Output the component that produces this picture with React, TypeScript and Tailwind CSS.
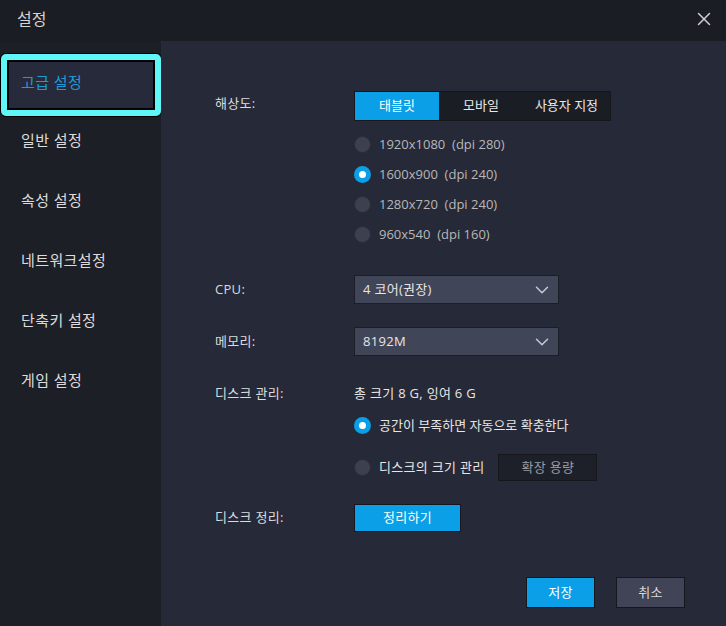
import { ChevronDown, X } from 'lucide-react';

const font = { fontFamily: '"Open Sans", "Noto Sans CJK KR", sans-serif' };

function Radio({ checked }: { checked?: boolean }) {
    return checked ? (
        <span className="w-[17px] h-[17px] rounded-full bg-[#0a9fe6] flex items-center justify-center shrink-0">
            <span className="w-[7px] h-[7px] rounded-full bg-white" />
        </span>
    ) : (
        <span className="w-[17px] h-[17px] rounded-full bg-[#3d4050] border border-[#2a2d39] shrink-0" />
    );
}

function Select({ value }: { value: string }) {
    return (
        <div className="w-[205px] h-[29px] bg-[#414558] border border-[#1c1e27] flex items-center justify-between pl-[8px] pr-[5px] text-[13px] text-[#e6e6e6]">
            <span>{value}</span>
            <ChevronDown size={22} strokeWidth={1.6} className="text-[#c8cad4]" />
        </div>
    );
}

export default function App() {
    const menu = ['일반 설정', '속성 설정', '네트워크설정', '단축키 설정', '게임 설정'];
    const resolutions = [
        ['1920x1080', '(dpi 280)', false],
        ['1600x900', '(dpi 240)', true],
        ['1280x720', '(dpi 240)', false],
        ['960x540', '(dpi 160)', false],
    ] as const;

    return (
        <div className="w-[726px] h-[626px] bg-[#1b1d24] flex flex-col overflow-hidden" style={font}>
            {/* 타이틀 바 */}
            <div className="h-[41px] flex items-center justify-between pl-[17px] pr-[11px] pb-[3px] shrink-0">
                <span className="text-[16px] text-[#d6d6d6]">설정</span>
                <X size={22} strokeWidth={1.6} className="text-[#d0d0d0]" />
            </div>

            <div className="flex flex-1 min-h-0">
                {/* 사이드바 */}
                <div className="w-[161px] bg-[#1d1f27] pt-[13px] shrink-0 text-[15px] tracking-[0.4px]">
                    <div className="ml-[1px] h-[62px] rounded-[5px] border-[6px] border-[#5ef6f6] shadow-[0_0_0_1px_#000]">
                        <div className="h-full border-2 border-black bg-[#272a3a] flex items-center pl-[12px] pb-[5px] text-[#1d9ad6]">
                            고급 설정
                        </div>
                    </div>
                    <div className="mt-[-6px]">
                        {menu.map((m) => (
                            <div key={m} className="h-[60px] flex items-center pl-[21px] text-[#dcdcdc]">
                                {m}
                            </div>
                        ))}
                    </div>
                </div>

                {/* 내용 */}
                <div className="flex-1 bg-[#262937] pl-[54px] pt-[50px] text-[13px] tracking-[0.3px] text-[#dcdcdc]">
                    <div className="flex">
                        <div className="w-[139px] pt-[3px]">해상도:</div>
                        <div>
                            <div className="flex h-[30px] w-[257px] border border-[#15171d] bg-[#1b1d25] tracking-normal">
                                <div className="w-[84px] bg-[#0a9fe6] flex items-center justify-center text-white">태블릿</div>
                                <div className="w-[84px] flex items-center justify-center text-[#e8e8e8]">모바일</div>
                                <div className="flex-1 flex items-center justify-center text-[#e8e8e8]">사용자 지정</div>
                            </div>
                            <div className="mt-[15px] flex flex-col gap-[13px]">
                                {resolutions.map(([r, d, c]) => (
                                    <div key={r} className="flex items-center gap-[8px] h-[17px] text-[#b8b8b8] tracking-normal">
                                        <Radio checked={c} />
                                        <span>
                                            {r}&nbsp;&nbsp;{d}
                                        </span>
                                    </div>
                                ))}
                            </div>
                        </div>
                    </div>

                    <div className="flex items-center mt-[32px]">
                        <div className="w-[139px]">CPU:</div>
                        <Select value="4 코어(권장)" />
                    </div>

                    <div className="flex items-center mt-[23px]">
                        <div className="w-[139px]">메모리:</div>
                        <Select value="8192M" />
                    </div>

                    <div className="flex mt-[27px]">
                        <div className="w-[139px] pt-[1px]">디스크 관리:</div>
                        <div>
                            <div className="pt-[1px] text-[#e6e6e6]">총 크기 8 G, 잉여 6 G</div>
                            <div className="flex items-center gap-[8px] mt-[12px] text-[#e6e6e6] tracking-normal">
                                <Radio checked />
                                <span>공간이 부족하면 자동으로 확충한다</span>
                            </div>
                            <div className="flex items-center mt-[19px]">
                                <Radio />
                                <span className="ml-[8px] text-[#e6e6e6]">디스크의 크기 관리</span>
                                <div className="ml-[14px] w-[99px] h-[27px] border border-[#15171d] bg-[#1e2029] flex items-center justify-center text-[#9a9ca4]">
                                    확장 용량
                                </div>
                            </div>
                        </div>
                    </div>

                    <div className="flex items-center mt-[23px]">
                        <div className="w-[139px]">디스크 정리:</div>
                        <div className="w-[107px] h-[28px] bg-[#0a9fe6] border border-[#15171d] flex items-center justify-center text-white">
                            정리하기
                        </div>
                    </div>

                    <div className="flex justify-end gap-[21px] pr-[41px] mt-[45px]">
                        <div className="w-[69px] h-[31px] bg-[#0a9fe6] border border-[#15171d] flex items-center justify-center text-white">
                            저장
                        </div>
                        <div className="w-[69px] h-[31px] bg-[#414457] border border-[#15171d] flex items-center justify-center text-[#d8d8d8]">
                            취소
                        </div>
                    </div>
                </div>
            </div>
        </div>
    );
}
